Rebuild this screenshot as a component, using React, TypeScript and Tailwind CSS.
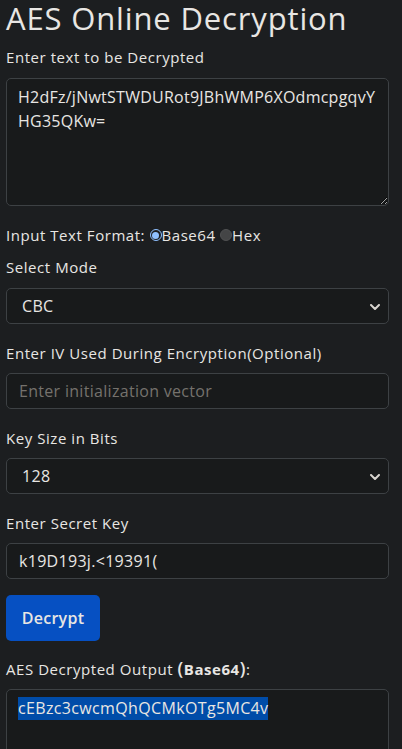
import { useState } from 'react'

const font = { fontFamily: '"Open Sans", "Liberation Sans", sans-serif' }

function Chevron() {
  return (
    <svg width="10" height="6" viewBox="0 0 10 6" className="pointer-events-none absolute right-[9px] top-[16px]">
      <path d="M1 1l4 4 4-4" fill="none" stroke="#d8d4cf" strokeWidth="2" strokeLinecap="round" strokeLinejoin="round" />
    </svg>
  )
}

function Select({ value, options }: { value: string; options: string[] }) {
  const [v, setV] = useState(value)
  return (
    <div className="relative">
      <select value={v} onChange={e => setV(e.target.value)}
        className="block w-full h-[36px] appearance-none rounded-[5px] border border-[#3d4144] bg-[#181a1b]
          pl-[15px] text-[16px] tracking-[0.3px] text-[#e8e6e3] outline-none">
        {options.map(o => <option key={o}>{o}</option>)}
      </select>
      <Chevron />
    </div>
  )
}

function Label({ children, className = '' }: { children: React.ReactNode; className?: string }) {
  return <div className={`h-[20px] leading-[20px] text-[15px] tracking-[0.55px] text-[#e8e6e3] ${className}`}>{children}</div>
}

export default function App() {
  const [text, setText] = useState('H2dFz/jNwtSTWDURot9JBhWMP6XOdmcpgqvY\nHG35QKw=')
  const [iv, setIv] = useState('')
  const [key, setKey] = useState('k19D193j.<19391(')

  return (
    <div className="min-h-[749px] bg-[#1c1e20] scheme-dark" style={font}>
      <div className="w-[383px] ml-[6px]">
        <h1 className="h-[36px] leading-[36px] text-[31px] font-medium tracking-[0.85px] text-[#e8e6e3]">
          AES Online Decryption
        </h1>

        <Label className="mt-[11px]">Enter text to be Decrypted</Label>
        <textarea value={text} onChange={e => setText(e.target.value)}
          className="mt-[11px] block w-full h-[128px] resize-y rounded-[5px] border border-[#3d4144] bg-[#181a1b]
            px-[11px] pt-[6px] text-[16px] leading-[24px] tracking-[0.25px] text-[#e8e6e3] outline-none" />

        <Label className="mt-[19px] flex items-center">
          Input Text Format:&nbsp;
          <span className="flex h-[12px] w-[12px] items-center justify-center rounded-full border-[1.5px] border-[#8fc0ff]">
            <span className="h-[7px] w-[7px] rounded-full bg-[#8fc0ff]" />
          </span>
          Base64&nbsp;
          <span className="h-[12px] w-[12px] rounded-full bg-[#444546] border border-[#505152]" />
          Hex
        </Label>

        <Label className="mt-[12px]">Select Mode</Label>
        <div className="mt-[11px]"><Select value="CBC" options={['ECB', 'CBC', 'CFB', 'OFB', 'CTR', 'GCM']} /></div>

        <Label className="mt-[19px]">Enter IV Used During Encryption(Optional)</Label>
        <input value={iv} onChange={e => setIv(e.target.value)} placeholder="Enter initialization vector"
          className="mt-[10px] block w-full h-[36px] rounded-[5px] border border-[#3d4144] bg-[#181a1b]
            px-[12px] text-[16px] tracking-[0.3px] text-[#e8e6e3] placeholder:text-[#75726d] outline-none" />

        <Label className="mt-[19px]">Key Size in Bits</Label>
        <div className="mt-[10px]"><Select value="128" options={['128', '192', '256']} /></div>

        <Label className="mt-[19px]">Enter Secret Key</Label>
        <input value={key} onChange={e => setKey(e.target.value)}
          className="mt-[10px] block w-full h-[36px] rounded-[5px] border border-[#3d4144] bg-[#181a1b]
            px-[12px] text-[16px] tracking-[0.3px] text-[#e8e6e3] outline-none" />

        <button className="mt-[16px] block h-[46px] w-[94px] rounded-[5px] bg-[#0650c2] text-[16px] font-semibold tracking-[0.3px] text-[#e8e6e3]">
          Decrypt
        </button>

        <Label className="mt-[17px]">
          AES Decrypted Output <span className="text-[18px] font-semibold">(</span><span className="font-bold">Base64</span><span className="text-[18px] font-semibold">)</span>:
        </Label>
        <div className="mt-[11px] h-[80px] rounded-[5px] border border-[#3d4144] bg-[#181a1b] px-[11px] pt-[6px]">
          <span className="inline-block h-[23px] bg-[#004ca8] text-[16px] leading-[23px] tracking-[0.35px] text-[#e8e6e3]">
            cEBzc3cwcmQhQCMkOTg5MC4v
          </span>
        </div>
      </div>
    </div>
  )
}
